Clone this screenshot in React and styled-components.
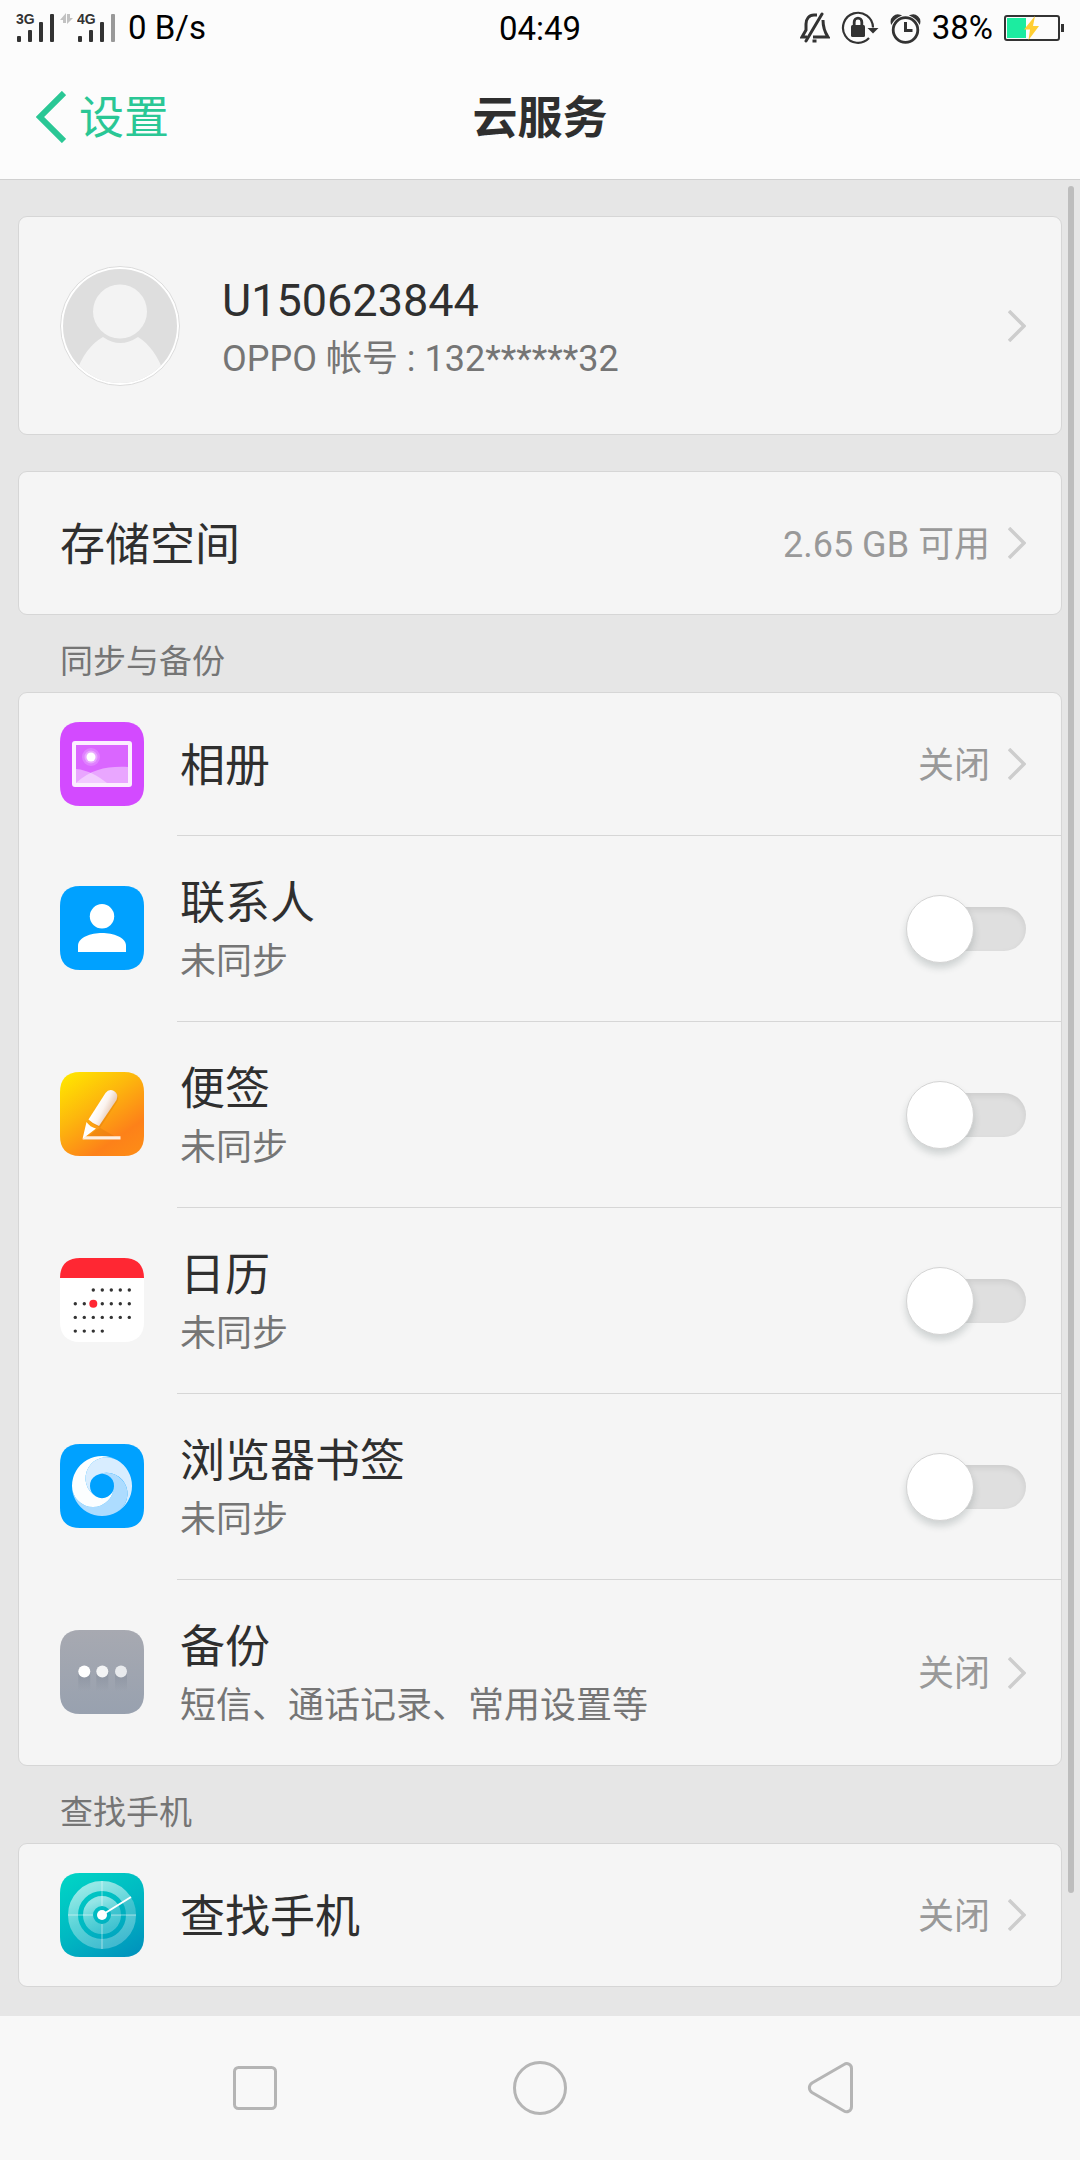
import React, { useState } from 'react';
import styled, { createGlobalStyle } from 'styled-components';

const GlobalStyle = createGlobalStyle`
  *,
  *::before,
  *::after {
    box-sizing: border-box;
  }

  body {
    margin: 0;
    background: #e6e6e6;
    color: #2f2f2f;
    font-family: Roboto, 'Noto Sans CJK SC', sans-serif;
  }

  svg {
    display: block;
    flex-shrink: 0;
  }
`;

const Page = styled.div`
  display: flex;
  flex-direction: column;
  min-height: 100vh;
`;

const Header = styled.header`
  background: #fcfcfc;
  border-bottom: 1px solid #d0d0d0;
`;

const StatusBar = styled.div`
  display: grid;
  grid-template-columns: 1fr auto 1fr;
  align-items: center;
  height: 54px;
  padding: 0 16px;
  color: #000;
  font-size: 33px;
  line-height: 54px;
`;

const StatusGroup = styled.div`
  display: flex;
  align-items: center;
  justify-content: ${props => (props.$end ? 'flex-end' : 'flex-start')};
  gap: ${props => (props.$end ? 11 : 4)}px;
`;

const Clock = styled.span`
  padding-top: 2px;
`;

const Speed = styled.span`
  padding-left: 7px;
`;

const TitleBar = styled.div`
  display: grid;
  grid-template-columns: 1fr auto 1fr;
  align-items: center;
  min-height: 125px;
  padding: 0 36px;
`;

const BackLink = styled.a`
  display: flex;
  align-items: center;
  gap: 13px;
  color: #2ac795;
  font-size: 45px;
  line-height: 60px;
  text-decoration: none;
`;

const BackLabel = styled.span`
  padding-top: 4px;
`;

const Title = styled.h1`
  margin: 0;
  padding-top: 4px;
  font-size: 45px;
  line-height: 60px;
  font-weight: 700;
`;

const Main = styled.main`
  position: relative;
  flex: 1;
  padding: 36px 18px 29px;
`;

const ScrollThumb = styled.div`
  position: absolute;
  top: 6px;
  right: 6px;
  width: 6px;
  height: 93%;
  border-radius: 3px;
  background: #bdbdbd;
`;

const Card = styled.section`
  margin-bottom: ${props => (props.$spaced ? 36 : 0)}px;
  border: 1px solid #d6d6d6;
  border-radius: 9px;
  background: #f5f5f5;
`;

const SectionTitle = styled.h2`
  margin: 0;
  padding: 23px 42px 6px;
  color: #757575;
  font-size: 33px;
  line-height: 48px;
  font-weight: 400;
`;

const Row = styled.div`
  display: flex;
  align-items: center;
  min-height: ${props => props.$height || 142}px;
  padding-left: 41px;
  color: inherit;
  text-decoration: none;
`;

const RowBody = styled.div`
  display: flex;
  flex: 1;
  align-items: center;
  align-self: stretch;
  gap: 18px;
  margin-left: ${props => props.$indent || 0}px;
  padding: 0 35px 0 3px;
  border-top: ${props => (props.$divided ? '1px solid #d6d6d6' : 'none')};
`;

const Labels = styled.div`
  display: flex;
  flex: 1;
  flex-direction: column;
  padding-top: 5px;
`;

const Name = styled.label`
  font-size: 45px;
  line-height: 62px;
`;

const Note = styled.span`
  color: #757575;
  font-size: 36px;
  line-height: 54px;
`;

const Value = styled.span`
  padding-top: 3px;
  color: #999;
  font-size: 36px;
  line-height: 54px;
`;

const Switch = styled.input`
  appearance: none;
  position: relative;
  flex-shrink: 0;
  width: 120px;
  height: 68px;
  margin: 0;
  cursor: pointer;

  &::before {
    content: '';
    position: absolute;
    top: 12px;
    left: 2px;
    right: 0;
    height: 44px;
    border-radius: 22px;
    background: ${props => (props.checked ? '#2ac795' : '#dfdfdf')};
    box-shadow: inset 0 3px 6px rgba(0, 0, 0, 0.08);
  }

  &::after {
    content: '';
    position: absolute;
    top: 0;
    left: ${props => (props.checked ? 52 : 0)}px;
    width: 68px;
    height: 68px;
    border: 1px solid #d4d4d4;
    border-radius: 50%;
    background: #fff;
    box-shadow: 0 5px 7px rgba(40, 60, 60, 0.18);
  }
`;

const NavBar = styled.nav`
  display: flex;
  align-items: center;
  min-height: 144px;
  padding: 0 112px;
  background: #f8f8f8;
`;

const NavButton = styled.button`
  display: flex;
  flex: 1;
  justify-content: center;
  padding: 0;
  border: none;
  background: none;
  cursor: pointer;
`;

const Signal = ({ label, weak }) => (
  <svg width="40" height="38" viewBox="0 -4 40 38" fill="#333">
    <text
      x="0"
      y="11"
      fontFamily="Liberation Sans, sans-serif"
      fontWeight="700"
      fontSize="14"
    >
      {label}
    </text>
    <rect x="1" y="23" width="4" height="6" rx="1" />
    <rect x="12" y="17" width="4" height="12" rx="1" />
    <rect x="23" y="9" width="4" height="20" rx="1" />
    <rect
      x="34"
      y="1"
      width="4"
      height="28"
      rx="1"
      fill={weak ? '#999' : '#333'}
    />
  </svg>
);

const DataArrows = () => (
  <svg width="13" height="30" viewBox="1 0 13 30" fill="#c2c2c2">
    <path d="M7 0v10H4V7H1zM8 11V1h3v4h3z" />
  </svg>
);

const MutedBell = () => (
  <svg width="30" height="32" viewBox="0 0 30 32" fill="none" stroke="#333">
    <path d="M17 3H14C9 3 6 7 6 12V18L2 25H7" strokeWidth="3" />
    <path d="M23 8C23 14 24 19 28 25H13" strokeWidth="3" />
    <path d="M6 29 22 2" strokeWidth="3" strokeLinecap="round" />
    <path d="M12.5 29h4" strokeWidth="3" />
  </svg>
);

const RotationLock = () => (
  <svg width="38" height="34" viewBox="0 0 38 34" fill="none" stroke="#333">
    <path d="M28 27A15 15 0 1 1 32 16.5" strokeWidth="2.2" />
    <path d="M26.5 17h11l-5.5 5.500z" fill="#333" stroke="none" />
    <rect x="10" y="14" width="14" height="12" rx="1.5" fill="#333" stroke="none" />
    <path d="M13.2 15v-4a3.8 3.8 0 0 1 7.6 0v4" strokeWidth="2.8" />
  </svg>
);

const Alarm = () => (
  <svg width="31" height="32" viewBox="0 0 31 32" fill="none" stroke="#333">
    <circle cx="15.5" cy="18" r="12.3" strokeWidth="2.8" />
    <path d="M15.5 10v8.500h7" strokeWidth="3" />
    <path
      d="M1.5 11A6.5 6.5 0 0 1 10 3.5Q5 5.5 1.5 11zM29.5 11A6.5 6.5 0 0 0 21 3.5Q26 5.5 29.5 11z"
      fill="#333"
      strokeWidth="1.5"
    />
  </svg>
);

const Battery = () => (
  <svg width="60" height="28" viewBox="0 0 60 28">
    <rect
      x="1"
      y="2"
      width="54"
      height="24"
      rx="2"
      fill="none"
      stroke="#333"
      strokeWidth="2"
    />
    <rect x="3" y="4" width="19" height="20" fill="#1ceca0" />
    <rect x="57" y="10" width="3" height="8" fill="#333" />
    <path d="M31 2 20 15.5h6L24.5 26 35 12h-6z" fill="#ffce33" />
  </svg>
);

const BackArrow = () => (
  <svg width="30" height="52" viewBox="0 0 30 52">
    <path d="M28 2 4 26l24 24" fill="none" stroke="#2ac795" strokeWidth="6" />
  </svg>
);

const Chevron = () => (
  <svg width="18" height="32" viewBox="0 0 18 32">
    <path d="M1 1l15 15L1 31" fill="none" stroke="#cdcdcd" strokeWidth="3.5" />
  </svg>
);

const Avatar = () => (
  <svg width="120" height="120" viewBox="0 0 120 120">
    <clipPath id="avatar">
      <circle cx="60" cy="60" r="57" />
    </clipPath>
    <circle cx="60" cy="60" r="59.5" fill="#fff" stroke="#dcdcdc" />
    <circle cx="60" cy="60" r="57" fill="#dedede" />
    <g clipPath="url(#avatar)" fill="#f3f3f3">
      <path d="M15 110C22 89 31 78 43 71Q60 83 78 71C89 78 98 89 105 110V122H15z" />
      <circle cx="60" cy="45.5" r="27" />
    </g>
  </svg>
);

const AppIcon = ({ fill, children }) => (
  <svg width="84" height="84" viewBox="0 0 84 84">
    <path
      d="M20 0H64C78 0 84 8 84 20V64C84 76 78 84 64 84H20C6 84 0 76 0 64V20C0 8 6 0 20 0z"
      fill={fill}
    />
    {children}
  </svg>
);

const PhotosIcon = () => (
  <AppIcon fill="#d34aff">
    <rect x="16" y="23" width="52" height="38" fill="#da66ff" />
    <path d="M16 61C31 47 48 44 68 45V61z" fill="#fff" opacity="0.42" />
    <path d="M16 47C28 48 38 54 47 61H16z" fill="#fff" opacity="0.42" />
    <circle cx="31" cy="35" r="9" fill="#fff" opacity="0.18" />
    <circle cx="31" cy="35" r="6.5" fill="#fff" opacity="0.3" />
    <circle cx="31" cy="35" r="4.5" fill="#fff" />
    <rect
      x="14"
      y="21"
      width="56"
      height="42"
      rx="1"
      fill="none"
      stroke="#fbeeff"
      strokeWidth="4"
    />
  </AppIcon>
);

const ContactsIcon = () => (
  <AppIcon fill="#00a1ff">
    <circle cx="42" cy="30.3" r="12.2" fill="#fff" />
    <path d="M18 66V60C18 51 31 47 42 47S66 51 66 60V66z" fill="#fff" />
  </AppIcon>
);

const NotesIcon = () => (
  <AppIcon fill="url(#notes)">
    <defs>
      <linearGradient id="notes" x1="0.1" y1="0" x2="0.8" y2="1">
        <stop offset="0" stopColor="#ffe600" />
        <stop offset="0.4" stopColor="#fdb70d" />
        <stop offset="0.8" stopColor="#fd8119" />
        <stop offset="1" stopColor="#fd8a17" />
      </linearGradient>
      <linearGradient id="pen" x1="0.3" y1="0.4" x2="0.7" y2="0.65">
        <stop offset="0" stopColor="#fff" />
        <stop offset="0.5" stopColor="#fbf3ee" />
        <stop offset="1" stopColor="#e9cfbd" />
      </linearGradient>
    </defs>
    <path
      d="M30 50 47 23Q51 17 56 21Q60 25 57 30L40 56L36 58L24 68H61"
      fill="#c25a00"
      opacity="0.2"
    />
    <path
      d="M28.5 47.5 45.5 21Q49 16.5 54 19Q59 22 56.5 28L39 54Q33 52 28.5 47.500z"
      fill="url(#pen)"
    />
    <path d="M25 64.3H60.5V67.5H22.500z" fill="#ffeedd" />
    <path d="M26.5 50Q30 55 36 56.5L25 65 22.5 67z" fill="#fff" />
  </AppIcon>
);

const calendarRows = [
  [2, 3, 4, 5, 6],
  [0, 1, 2, 3, 4, 5, 6],
  [0, 1, 2, 3, 4, 5, 6],
  [0, 1, 2, 3],
];

const CalendarIcon = () => (
  <AppIcon fill="#fff">
    <path d="M0 20C0 8 6 0 20 0H64C78 0 84 8 84 20z" fill="#ff2733" />
    {calendarRows.map((days, week) =>
      days.map(day => {
        const today = week === 1 && day === 2;
        return (
          <circle
            key={`${week}-${day}`}
            cx={15.3 + day * 9}
            cy={32 + week * 13.7}
            r={today ? 4 : 1.7}
            fill={today ? '#ff2733' : '#333'}
          />
        );
      })
    )}
  </AppIcon>
);

const swirl =
  'M57 16A30 30 0 0 0 12 42A21 21 0 0 0 54 42A12 12 0 0 1 36 52.4A21 21 0 0 1 57 16z';

const BrowserIcon = () => (
  <AppIcon fill="#00a1ff">
    <path d={swirl} fill="#d8edff" transform="rotate(120 42 42)" />
    <path d={swirl} fill="#addcff" transform="rotate(240 42 42)" />
    <path d={swirl} fill="#fcfeff" />
  </AppIcon>
);

const BackupIcon = () => (
  <AppIcon fill="url(#backup)">
    <defs>
      <linearGradient id="backup" x1="0" y1="0" x2="0" y2="1">
        <stop offset="0" stopColor="#a7a9b1" />
        <stop offset="1" stopColor="#98a1af" />
      </linearGradient>
      <linearGradient id="backupShade" x1="0" y1="0" x2="0" y2="1">
        <stop offset="0" stopColor="#7c8594" stopOpacity="0.5" />
        <stop offset="1" stopColor="#7c8594" stopOpacity="0" />
      </linearGradient>
    </defs>
    {[24.3, 42.3, 61].map((x, i) => (
      <g key={x}>
        <rect x={x - 6} y="42" width="12" height="19" fill="url(#backupShade)" />
        <circle cx={x} cy="41.5" r="6" fill={['#fff', '#f3f4f5', '#e8eaed'][i]} />
      </g>
    ))}
  </AppIcon>
);

const RadarIcon = () => (
  <AppIcon fill="url(#radar)">
    <defs>
      <linearGradient id="radar" x1="0.2" y1="0" x2="0.8" y2="1">
        <stop offset="0" stopColor="#00d2c5" />
        <stop offset="0.5" stopColor="#00b9c2" />
        <stop offset="1" stopColor="#0095bd" />
      </linearGradient>
      <linearGradient id="radarRing" x1="0.3" y1="0" x2="0.7" y2="1">
        <stop offset="0" stopColor="#fff" stopOpacity="0.58" />
        <stop offset="0.5" stopColor="#fff" stopOpacity="0.36" />
        <stop offset="1" stopColor="#fff" stopOpacity="0.26" />
      </linearGradient>
    </defs>
    <g fill="none" stroke="url(#radarRing)" strokeWidth="10">
      <circle cx="42" cy="42" r="29" />
      <circle cx="42" cy="42" r="14" />
    </g>
    <path d="M42 42 71 24A34 34 0 0 1 76 42z" fill="#00a8bd" opacity="0.3" />
    <path
      d="M42 8V33M42 51V76M8 42H33M51 42H76"
      stroke="#fff"
      strokeWidth="2"
      opacity="0.25"
    />
    <path d="M42 42 71 24" stroke="#fff" strokeWidth="2" />
    <circle cx="42" cy="42" r="5" fill="#fff" />
  </AppIcon>
);

const services = [
  { id: 'photos', name: '相册', value: '关闭', icon: PhotosIcon },
  { id: 'contacts', name: '联系人', note: '未同步', icon: ContactsIcon },
  { id: 'notes-sync', name: '便签', note: '未同步', icon: NotesIcon },
  { id: 'calendar', name: '日历', note: '未同步', icon: CalendarIcon },
  { id: 'bookmarks', name: '浏览器书签', note: '未同步', icon: BrowserIcon },
  {
    id: 'backup-settings',
    name: '备份',
    note: '短信、通话记录、常用设置等',
    value: '关闭',
    icon: BackupIcon,
  },
];

const ServiceRow = ({ id, name, note, value, icon: Icon, divided }) => {
  const [on, setOn] = useState(false);
  const linked = Boolean(value);

  return (
    <Row
      as={linked ? 'a' : 'div'}
      href={linked ? `#${id}` : undefined}
      $height={note ? 186 : 142}
    >
      <Icon />
      <RowBody $indent={33} $divided={divided}>
        <Labels>
          <Name
            as={linked ? 'span' : 'label'}
            htmlFor={linked ? undefined : id}
          >
            {name}
          </Name>
          {note && <Note>{note}</Note>}
        </Labels>
        {linked ? (
          <>
            <Value>{value}</Value>
            <Chevron />
          </>
        ) : (
          <Switch
            id={id}
            type="checkbox"
            role="switch"
            checked={on}
            onChange={e => setOn(e.target.checked)}
          />
        )}
      </RowBody>
    </Row>
  );
};

const App = () => (
  <Page>
    <GlobalStyle />
    <Header>
      <StatusBar>
        <StatusGroup>
          <Signal label="3G" />
          <DataArrows />
          <Signal label="4G" weak />
          <Speed>0 B/s</Speed>
        </StatusGroup>
        <Clock>04:49</Clock>
        <StatusGroup $end>
          <MutedBell />
          <RotationLock />
          <Alarm />
          <span>38%</span>
          <Battery />
        </StatusGroup>
      </StatusBar>
      <TitleBar>
        <BackLink href="#settings">
          <BackArrow />
          <BackLabel>设置</BackLabel>
        </BackLink>
        <Title>云服务</Title>
      </TitleBar>
    </Header>

    <Main>
      <Card $spaced>
        <Row as="a" href="#account" $height={217}>
          <Avatar />
          <RowBody $indent={39}>
            <Labels>
              <Name as="span">U150623844</Name>
              <Note>OPPO 帐号 : 132******32</Note>
            </Labels>
            <Chevron />
          </RowBody>
        </Row>
      </Card>

      <Card>
        <Row as="a" href="#storage">
          <RowBody $indent={-3}>
            <Labels>
              <Name as="span">存储空间</Name>
            </Labels>
            <Value>2.65 GB 可用</Value>
            <Chevron />
          </RowBody>
        </Row>
      </Card>

      <SectionTitle>同步与备份</SectionTitle>
      <Card>
        {services.map((service, i) => (
          <ServiceRow key={service.id} {...service} divided={i > 0} />
        ))}
      </Card>

      <SectionTitle>查找手机</SectionTitle>
      <Card>
        <ServiceRow id="find" name="查找手机" value="关闭" icon={RadarIcon} />
      </Card>
      <ScrollThumb />
    </Main>

    <NavBar>
      <NavButton aria-label="最近任务">
        <svg width="44" height="44" viewBox="0 0 44 44">
          <rect
            x="1.5"
            y="1.5"
            width="41"
            height="41"
            rx="4"
            fill="none"
            stroke="#b5b5b5"
            strokeWidth="3"
          />
        </svg>
      </NavButton>
      <NavButton aria-label="主页">
        <svg width="54" height="54" viewBox="0 0 54 54">
          <circle
            cx="27"
            cy="27"
            r="25.5"
            fill="none"
            stroke="#b5b5b5"
            strokeWidth="3"
          />
        </svg>
      </NavButton>
      <NavButton aria-label="返回">
        <svg width="56" height="54" viewBox="0 0 56 54">
          <path
            d="M47 3.5C50 1.5 54.5 3 54.5 7.5V45.5C54.5 50 50 52 47 50L15 31.5C11.5 29 11.5 24.5 15 22z"
            fill="none"
            stroke="#b5b5b5"
            strokeWidth="3"
          />
        </svg>
      </NavButton>
    </NavBar>
  </Page>
);

export default App;
